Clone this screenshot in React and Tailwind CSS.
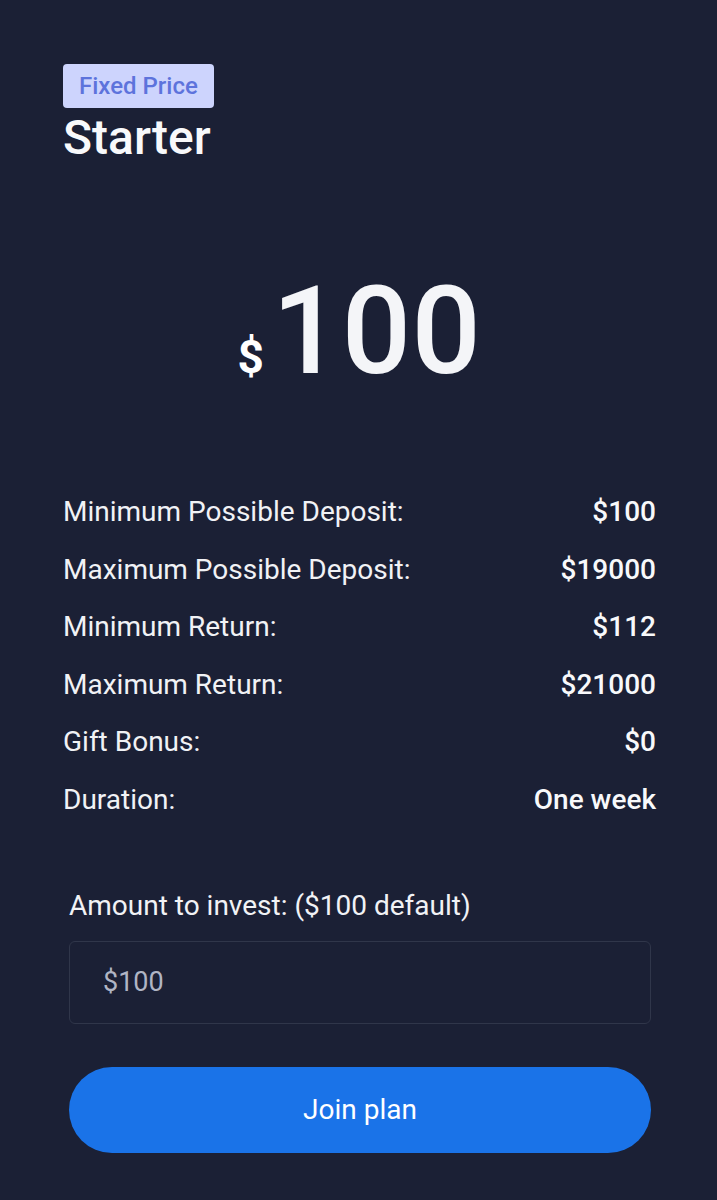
const ROWS = [
  { label: "Minimum Possible Deposit:", value: "$100" },
  { label: "Maximum Possible Deposit:", value: "$19000" },
  { label: "Minimum Return:", value: "$112" },
  { label: "Maximum Return:", value: "$21000" },
  { label: "Gift Bonus:", value: "$0" },
  { label: "Duration:", value: "One week" },
];

export default function App() {
  return (
    <div
      className="min-h-[1200px] bg-[#1b2035] text-white"
      style={{ fontFamily: "Roboto, 'Noto Sans', sans-serif" }}
    >
      <div className="pl-[63px] pr-[61px] pt-[64px]">
        {/* Header */}
        <div className="flex flex-col items-start">
          <span className="h-[44px] px-[16px] flex items-center rounded-[4px] bg-[#cdd4fd] text-[#5d73dc] text-[24px] font-medium">
            Fixed Price
          </span>
          <h1 className="mt-[2px] text-[48px] leading-[56px] font-medium text-[#f8f9fb]">Starter</h1>
        </div>

        {/* Price */}
        <div className="mt-[105px] flex items-baseline justify-center gap-[8px]">
          <span className="text-[46px] leading-none font-bold">$</span>
          <span className="text-[122px] leading-none font-medium text-[#f4f5f8] tracking-[0.5px]">100</span>
        </div>

        {/* Details */}
        <div className="mt-[101px] flex flex-col gap-[21.6px]">
          {ROWS.map((row) => (
            <div key={row.label} className="flex justify-between items-center h-[36px] text-[28px] leading-[36px]">
              <span className="text-[#f1f2f5]">{row.label}</span>
              <span className="font-medium text-[#f8f9fb]">{row.value}</span>
            </div>
          ))}
        </div>

        {/* Form */}
        <div className="mt-[70px] pl-[6px] pr-[5px]">
          <label className="block text-[28px] leading-[36px] text-[#f1f2f5]">Amount to invest: ($100 default)</label>
          <input
            type="text"
            placeholder="$100"
            className="mt-[17px] w-full h-[83px] rounded-[6px] border border-[#30364a] bg-[#1b2035] px-[33px] text-[27px] text-white placeholder:text-[#b0b5c4] outline-none"
          />
          <button className="mt-[43px] w-full h-[86px] rounded-full bg-[#1a73e8] text-[28px] text-white">
            Join plan
          </button>
        </div>
      </div>
    </div>
  );
}
